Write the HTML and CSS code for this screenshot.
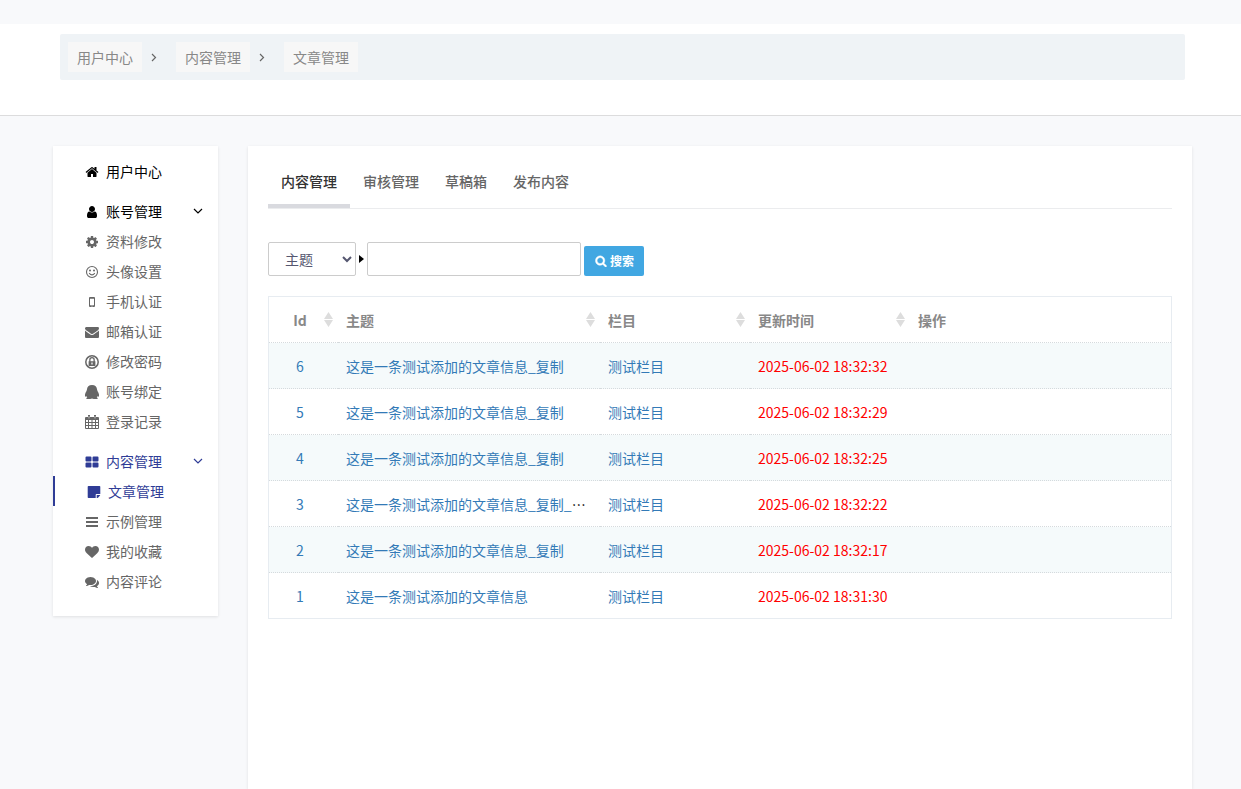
FILE: index.html
```html
<!DOCTYPE html>
<html lang="zh-CN">
<head>
<meta charset="utf-8">
<meta name="viewport" content="width=device-width, initial-scale=1">
<title>内容管理</title>
<link rel="stylesheet" href="styles.css">
</head>
<body>
<header class="page-head">
  <nav class="breadcrumb" aria-label="位置">
    <a class="crumb" href="#">用户中心</a>
    <svg class="crumb-sep" viewBox="0 0 6 10"><path d="M1 2 4.500 5.500 1 9"/></svg>
    <a class="crumb" href="#">内容管理</a>
    <svg class="crumb-sep" viewBox="0 0 6 10"><path d="M1 2 4.500 5.500 1 9"/></svg>
    <a class="crumb" href="#">文章管理</a>
  </nav>
</header>
<div class="layout">
  <nav class="sidebar" aria-label="菜单">
    <div class="group">
      <a class="item top" href="#"><svg class="icon" viewBox="0 0 1792 1792"><path d="M1472 992v480q0 26-19 45t-45 19h-384v-384h-256v384h-384q-26 0-45-19t-19-45v-480q0-1 .5-3t.5-3l575-474 575 474q1 2 1 6zm223-69l-62 74q-8 9-21 11h-3q-13 0-21-7l-692-577-692 577q-12 8-24 7-13-2-21-11l-62-74q-8-10-7-23.500t11-21.500l719-599q32-26 76-26t76 26l244 204v-195q0-14 9-23t23-9h192q14 0 23 9t9 23v408l219 182q10 8 11 21.500t-7 23.500z"/></svg>用户中心</a>
    </div>
    <div class="group">
      <a class="item top" href="#"><svg class="icon" viewBox="0 0 1792 1792"><path d="M1536 1399q0 109-62.500 187t-150.500 78h-854q-88 0-150.500-78t-62.500-187q0-85 8.500-160.500t31.500-152 58.500-131 94-89 134.500-34.500q131 128 313 128t313-128q76 0 134.500 34.500t94 89 58.500 131 31.500 152 8.500 160.500zm-256-887q0 159-112.500 271.500t-271.500 112.500-271.500-112.500-112.500-271.500 112.500-271.500 271.500-112.500 271.500 112.500 112.500 271.500z"/></svg>账号管理<svg class="arrow" viewBox="0 0 10 6"><path d="M1 1 5 5 9 1"/></svg></a>
      <a class="item" href="#"><svg class="icon" viewBox="0 0 1792 1792"><path d="M1152 896q0-106-75-181t-181-75-181 75-75 181 75 181 181 75 181-75 75-181zm512-109v222q0 12-8 23t-20 13l-185 28q-19 54-39 91 35 50 107 138 10 12 10 25t-9 23q-27 37-99 108t-94 71q-12 0-26-9l-138-108q-44 23-91 38-16 136-29 186-7 28-36 28h-222q-14 0-24.500-8.500t-11.500-21.500l-28-184q-49-16-90-37l-141 107q-10 9-25 9-14 0-25-11-126-114-165-168-7-10-7-23 0-12 8-23 15-21 51-66.500t54-70.500q-27-50-41-99l-183-27q-13-2-21-12.500t-8-23.500v-222q0-12 8-23t19-13l186-28q14-46 39-92-40-57-107-138-10-12-10-24 0-10 9-23 26-36 98.500-107.500t94.500-71.500q13 0 26 10l138 107q44-23 91-38 16-136 29-186 7-28 36-28h222q14 0 24.500 8.500t11.500 21.500l28 184q49 16 90 37l142-107q9-9 24-9 13 0 25 10 129 119 165 170 7 8 7 22 0 12-8 23-15 21-51 66.500t-54 70.500q26 50 41 98l183 28q13 2 21 12.500t8 23.500z"/></svg>资料修改</a>
      <a class="item" href="#"><svg class="icon" viewBox="0 0 14 14"><circle class="line" cx="7" cy="7" r="5.500"/><circle cx="5" cy="5.500" r="1"/><circle cx="9" cy="5.500" r="1"/><path class="line" d="M4.200 8.200q2.800 3.400 5.600 0"/></svg>头像设置</a>
      <a class="item" href="#"><svg class="icon" viewBox="0 0 14 14"><path fill-rule="evenodd" d="M5 2h4q1 0 1 1v8q0 1-1 1H5q-1 0-1-1V3q0-1 1-1zm0 1.700v6.600h4V3.700zM6.500 10.800v.7h1v-.7z"/></svg>手机认证</a>
      <a class="item" href="#"><svg class="icon" viewBox="0 0 1792 1792"><path d="M1792 710v794q0 66-47 113t-113 47h-1472q-66 0-113-47t-47-113v-794q44 49 101 87 362 246 497 345 57 42 92.500 65.500t94.500 48 110 24.500h2q51 0 110-24.500t94.500-48 92.500-65.500q170-123 498-345 57-39 100-87zm0-294q0 79-49 151t-122 123q-376 261-468 325-10 7-42.500 31t-54 38.500-52 32.500-57.500 27-50 9h-2q-23 0-50-9t-57.500-27-52-32.500-54-38.500-42.500-31q-91-64-262-182.500t-205-142.500q-62-42-117-115.500t-55-136.500q0-78 41.500-130t118.500-52h1472q65 0 112.500 47t47.500 113z"/></svg>邮箱认证</a>
      <a class="item" href="#"><svg class="icon" viewBox="0 0 14 14"><circle class="ring" cx="7" cy="7" r="6.200"/><path fill-rule="evenodd" d="M7 2a2.800 2.800 0 0 1 2.800 2.800v1.400h.6v4.800H3.600V6.200h.6V4.800A2.800 2.800 0 0 1 7 2zm0 1.300a1.500 1.500 0 0 0-1.500 1.500v1.400h3V4.800A1.500 1.500 0 0 0 7 3.300zM6.400 7.500v2h1.200v-2z"/></svg>修改密码</a>
      <a class="item" href="#"><svg class="icon" viewBox="1 0 12 14" preserveAspectRatio="none"><path d="M7 0c2.700 0 4.300 1.900 4.300 4.500 0 .6.400 1 .5 1.700.7 1.300 1.300 2.800 1.300 4.300 0 .8-.2 1.200-.5 1.200s-.4-.2-.6-.6c-.2.500-.6 1.100-1 1.500.6.200 1 .5.900.8-.3.800-3.900.9-4.900.1-1 .8-4.600.7-4.900-.1-.1-.3.300-.6.900-.8-.4-.4-.8-1-1-1.500-.2.400-.3.600-.6.600s-.5-.4-.5-1.200c0-1.500.6-3 1.300-4.300.1-.7.500-1.100.5-1.700C2.700 1.900 4.300 0 7 0z"/></svg>账号绑定</a>
      <a class="item" href="#"><svg class="icon" viewBox="0 0 14 14"><path fill-rule="evenodd" d="M3 0h2v2h4V0h2v2h2q1 0 1 1v10q0 1-1 1H1q-1 0-1-1V3q0-1 1-1h2zM1 5v2h2V5zm3 0v2h2.500V5zm3.500 0v2H10V5zM11 5v2h2V5zM1 8v2h2V8zm3 0v2h2.500V8zm3.500 0v2H10V8zM11 8v2h2V8zM1 11v2h2v-2zm3 0v2h2.500v-2zm3.500 0v2H10v-2zm3.500 0v2h2v-2zM3.700 1v2.500h.6V1zm6 0v2.500h.6V1z"/></svg>登录记录</a>
    </div>
    <div class="group">
      <a class="item open" href="#"><svg class="icon" viewBox="0 0 14 14"><path d="M1.500 1.500h4q1 0 1 1v3q0 1-1 1h-4q-1 0-1-1v-3q0-1 1-1zm7 0h4q1 0 1 1v3q0 1-1 1h-4q-1 0-1-1v-3q0-1 1-1zm-7 6h4q1 0 1 1v3q0 1-1 1h-4q-1 0-1-1v-3q0-1 1-1zm7 0h4q1 0 1 1v3q0 1-1 1h-4q-1 0-1-1v-3q0-1 1-1z"/></svg>内容管理<svg class="arrow" viewBox="0 0 10 6"><path d="M1 1 5 5 9 1"/></svg></a>
      <a class="item active" href="#" aria-current="page"><svg class="icon" viewBox="0 0 14 14"><path d="M1.500 1h11q.8 0 .8.800V9H9.500q-.8 0-.8.800V13H1.500q-.8 0-.8-.8V1.800q0-.8.800-.8zM9.700 10h3.500q-.1.600-.6 1.100l-1.300 1.300q-.5.500-1.600.6z"/></svg>文章管理</a>
      <a class="item" href="#"><svg class="icon" viewBox="0 0 14 14"><path d="M1 2h12v2H1zm0 4h12v2H1zm0 4h12v2H1z"/></svg>示例管理</a>
      <a class="item" href="#"><svg class="icon" viewBox="0 0 1792 1792"><path d="M896 1664q-26 0-44-18l-624-602q-10-8-27.500-26t-55.500-65.500-68-97.500-53.500-121-23.500-138q0-220 127-344t351-124q62 0 126.500 21.500t120 58 95.500 68.500 76 68q36-36 76-68t95.500-68.500 120-58 126.500-21.500q224 0 351 124t127 344q0 221-229 450l-623 600q-18 18-44 18z"/></svg>我的收藏</a>
      <a class="item" href="#"><svg class="icon" viewBox="0 0 1792 1792"><path d="M1408 768q0 139-94 257t-256.500 186.500-353.500 68.500q-86 0-176-16-124 88-278 128-36 9-86 16h-3q-11 0-20.500-8t-11.500-21q-1-3-1-6.500t.5-6.500 2-6l2.500-5 3.500-5.500 4-5 4.500-5 4-4.500q5-6 23-25t26-29.500 22.500-29 25-38.500 20.500-44q-124-72-195-177t-71-224q0-139 94-257t256.500-186.500 353.500-68.500 353.500 68.500 256.500 186.500 94 257zm384 256q0 120-71 224.500t-195 176.500q10 24 20.500 44t25 38.500 22.500 29 26 29.500 23 25q1 1 4 4.500t4.500 5 4 5 3.500 5.500l2.500 5 2 6 .5 6.500-1 6.500q-3 14-13 22t-22 7q-50-7-86-16-154-40-278-128-90 16-176 16-271 0-472-132 58 4 88 4 161 0 309-45t264-129q125-92 192-212t67-254q0-77-23-152 129 71 204 178t75 230z"/></svg>内容评论</a>
    </div>
  </nav>
  <main class="card">
    <nav class="tabs" aria-label="内容">
      <a class="tab current" href="#">内容管理</a>
      <a class="tab" href="#">审核管理</a>
      <a class="tab" href="#">草稿箱</a>
      <a class="tab" href="#">发布内容</a>
    </nav>
    <form class="search">
      <select class="field" aria-label="搜索字段"><option>主题</option></select>
      <svg class="caret" viewBox="0 0 5 8"><path d="M0 0 5 4 0 8z"/></svg>
      <input class="keyword" type="text" aria-label="关键词">
      <button class="submit" type="button"><svg class="submit-icon" viewBox="0 0 1792 1792"><path d="M1216 832q0-185-131.500-316.500t-316.500-131.500-316.500 131.500-131.500 316.500 131.500 316.500 316.500 131.500 316.500-131.500 131.500-316.500zm512 832q0 52-38 90t-90 38q-54 0-90-38l-343-342q-179 124-399 124-143 0-273.500-55.500t-225-150-150-225-55.500-273.500 55.500-273.500 150-225 225-150 273.500-55.500 273.500 55.500 225 150 150 225 55.500 273.500q0 220-124 399l343 343q37 37 37 90z"/></svg>搜索</button>
    </form>
    <table class="list">
      <colgroup><col class="col-id"><col class="col-title"><col class="col-cat"><col class="col-time"><col></colgroup>
      <thead>
        <tr>
          <th class="id">Id<svg class="sort" viewBox="0 0 9 15"><path d="M4.500 0 9 7H0zM0 8h9l-4.500 7z"/></svg></th>
          <th>主题<svg class="sort" viewBox="0 0 9 15"><path d="M4.500 0 9 7H0zM0 8h9l-4.500 7z"/></svg></th>
          <th>栏目<svg class="sort" viewBox="0 0 9 15"><path d="M4.500 0 9 7H0zM0 8h9l-4.500 7z"/></svg></th>
          <th>更新时间<svg class="sort" viewBox="0 0 9 15"><path d="M4.500 0 9 7H0zM0 8h9l-4.500 7z"/></svg></th>
          <th>操作</th>
        </tr>
      </thead>
      <tbody>
        <tr><td class="id"><a href="#">6</a></td><td><a href="#">这是一条测试添加的文章信息_复制</a></td><td><a href="#">测试栏目</a></td><td class="time">2025-06-02 18:32:32</td><td></td></tr>
        <tr><td class="id"><a href="#">5</a></td><td><a href="#">这是一条测试添加的文章信息_复制</a></td><td><a href="#">测试栏目</a></td><td class="time">2025-06-02 18:32:29</td><td></td></tr>
        <tr><td class="id"><a href="#">4</a></td><td><a href="#">这是一条测试添加的文章信息_复制</a></td><td><a href="#">测试栏目</a></td><td class="time">2025-06-02 18:32:25</td><td></td></tr>
        <tr><td class="id"><a href="#">3</a></td><td><a href="#">这是一条测试添加的文章信息_复制_复制</a></td><td><a href="#">测试栏目</a></td><td class="time">2025-06-02 18:32:22</td><td></td></tr>
        <tr><td class="id"><a href="#">2</a></td><td><a href="#">这是一条测试添加的文章信息_复制</a></td><td><a href="#">测试栏目</a></td><td class="time">2025-06-02 18:32:17</td><td></td></tr>
        <tr><td class="id"><a href="#">1</a></td><td><a href="#">这是一条测试添加的文章信息</a></td><td><a href="#">测试栏目</a></td><td class="time">2025-06-02 18:31:30</td><td></td></tr>
      </tbody>
    </table>
  </main>
</div>
</body>
</html>
```
FILE: styles.css
```css
* { box-sizing: border-box; }

body {
  margin: 0;
  min-height: 100vh;
  display: flex;
  flex-direction: column;
  padding-top: 24px;
  background: #f8f9fb;
  color: #000;
  font: 14px/20px "Noto Sans CJK SC", sans-serif;
}

a { color: inherit; text-decoration: none; }

.page-head {
  padding: 10px 56px 35px 60px;
  background: #fff;
  border-bottom: 1px solid #dcdcdd;
}

.breadcrumb {
  display: flex;
  align-items: center;
  padding: 8px;
  background: #eff3f6;
  border-radius: 2px;
}

.crumb {
  padding: 0 9px;
  line-height: 30px;
  color: #888;
  background: #f7f7f7;
}

.crumb-sep {
  width: 6px;
  height: 10px;
  margin: 0 19px 0 9px;
  fill: none;
  stroke: #666;
  stroke-width: 1.2;
}

.layout {
  flex: 1;
  display: flex;
  gap: 30px;
  padding: 30px 49px 0 53px;
}

.sidebar {
  flex: 0 0 165px;
  align-self: flex-start;
  display: grid;
  gap: 10px;
  padding: 10px 0 20px;
  background: #fff;
  box-shadow: 0 1px 3px rgba(0, 0, 0, .1);
}

.item {
  display: flex;
  align-items: center;
  gap: 7px;
  height: 30px;
  padding: 0 15px 0 32px;
  color: #666;
}

.item.top { color: #000; }
.item.open, .item.active { color: #2f3c96; }
.item.active { border-left: 2px solid #2f3c96; }

.icon {
  width: 14px;
  height: 14px;
  margin-top: 2px;
  fill: currentColor;
}

.line { fill: none; stroke: currentColor; stroke-width: 1.1; }
.ring { fill: none; stroke: currentColor; stroke-width: 1.5; }

.arrow {
  width: 10px;
  height: 6px;
  margin-left: auto;
  fill: none;
  stroke: currentColor;
  stroke-width: 1.2;
}

.card {
  flex: 1;
  min-width: 0;
  padding: 20px 20px 30px;
  background: #fff;
  box-shadow: 0 1px 3px rgba(0, 0, 0, .1);
}

.tabs {
  display: flex;
  border-bottom: 1px solid #ebecee;
}

.tab {
  padding: 5px 13px 13px;
  border-bottom: 4px solid transparent;
  color: #666;
  font-weight: 500;
}

.tab.current { color: #333; border-color: #d9dadf; }

.search {
  display: flex;
  align-items: flex-end;
  margin: 33px 0 20px;
}

.field, .keyword {
  height: 34px;
  border: 1px solid #ccc;
  border-radius: 2px;
  background: #fff;
  color: #555770;
  font: inherit;
}

.field { width: 88px; padding: 0 0 0 12px; }
.keyword { width: 214px; padding: 6px 12px; }

.caret {
  width: 5px;
  height: 8px;
  margin: 0 3px 13px;
}

.submit {
  display: flex;
  align-items: center;
  gap: 3px;
  height: 30px;
  margin-left: 3px;
  padding: 0 10px 0 11px;
  border: 0;
  border-radius: 2px;
  background: #41a7e2;
  color: #fff;
  font: bold 12px/18px "Noto Sans CJK SC", sans-serif;
}

.submit-icon {
  width: 12px;
  height: 12px;
  fill: currentColor;
  stroke: currentColor;
  stroke-width: 60;
}

.list {
  width: 100%;
  table-layout: fixed;
  border: 1px solid #e7ecf1;
  border-spacing: 0;
}

.col-id { width: 69px; }
.col-title { width: 262px; }
.col-cat { width: 150px; }
.col-time { width: 160px; }

.list th, .list td {
  height: 46px;
  padding: 0 8px;
  border-bottom: 1px dotted #d5dadd;
  text-align: left;
  white-space: nowrap;
  overflow: hidden;
  text-overflow: ellipsis;
}

.list th { position: relative; color: #888; }
.list .id { padding-right: 15px; text-align: center; }
.list tbody tr:last-child td { height: 45px; border-bottom: 0; }
.list tbody tr:nth-child(odd) td { background: #f5fafb; }
.list td a { color: #337ab7; }
.list .time { color: #f00; }

.sort {
  position: absolute;
  top: 15px;
  right: 5px;
  width: 9px;
  height: 15px;
  fill: #ddd;
}
```
